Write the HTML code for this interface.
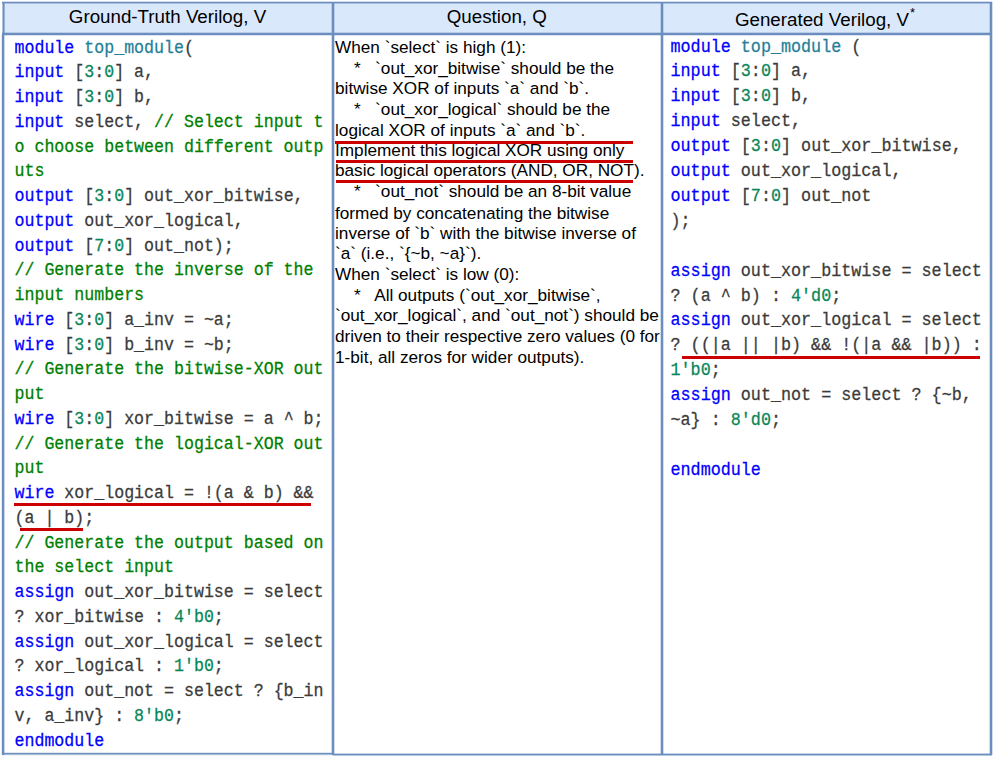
<!DOCTYPE html>
<html><head><meta charset="utf-8"><style>
html,body{margin:0;padding:0;background:#fff;}
body{width:996px;height:757px;position:relative;overflow:hidden;}
.code{position:absolute;white-space:pre;font-family:"Liberation Mono",monospace;font-size:16.63px;line-height:24px;color:#3b3b3b;-webkit-text-stroke:0.25px currentColor;transform:scaleY(1.08);transform-origin:0 16px;}
.r{font-size:16.74px;}
.q{position:absolute;white-space:pre;font-family:"Liberation Sans",sans-serif;font-size:17.2px;line-height:20px;color:#000;}
.h{position:absolute;width:400px;text-align:center;white-space:pre;font-family:"Liberation Sans",sans-serif;font-size:18.75px;line-height:24px;color:#000;}
</style></head><body>
<div style="position:absolute;left:3px;top:3px;width:988px;height:31px;background:#dae8fc"></div><div style="position:absolute;left:2px;top:1px;width:990px;height:4px;background:linear-gradient(to bottom, rgba(108,142,191,0.3) 0px, rgba(108,142,191,0.3) 1px, rgba(108,142,191,1) 1px, rgba(108,142,191,1) 2px, rgba(108,142,191,0.45) 2px, rgba(108,142,191,0.45) 3px, rgba(108,142,191,0.0) 3px, rgba(108,142,191,0.0) 4px)"></div><div style="position:absolute;left:2px;top:32px;width:990px;height:4px;background:linear-gradient(to bottom, rgba(108,142,191,0.3) 0px, rgba(108,142,191,0.3) 1px, rgba(108,142,191,1) 1px, rgba(108,142,191,1) 2px, rgba(108,142,191,1) 2px, rgba(108,142,191,1) 3px, rgba(108,142,191,0.25) 3px, rgba(108,142,191,0.25) 4px)"></div><div style="position:absolute;left:2px;top:752px;width:331px;height:4px;background:linear-gradient(to bottom, rgba(108,142,191,0.2) 0px, rgba(108,142,191,0.2) 1px, rgba(108,142,191,1) 1px, rgba(108,142,191,1) 2px, rgba(108,142,191,0.6) 2px, rgba(108,142,191,0.6) 3px, rgba(108,142,191,0.1) 3px, rgba(108,142,191,0.1) 4px)"></div><div style="position:absolute;left:333px;top:753px;width:659px;height:4px;background:linear-gradient(to bottom, rgba(108,142,191,0.4) 0px, rgba(108,142,191,0.4) 1px, rgba(108,142,191,1) 1px, rgba(108,142,191,1) 2px, rgba(108,142,191,0.5) 2px, rgba(108,142,191,0.5) 3px, rgba(108,142,191,0.0) 3px, rgba(108,142,191,0.0) 4px)"></div><div style="position:absolute;left:1px;top:2px;width:4px;height:33px;background:linear-gradient(to right, rgba(108,142,191,0.0) 0px, rgba(108,142,191,0.0) 1px, rgba(108,142,191,0.55) 1px, rgba(108,142,191,0.55) 2px, rgba(108,142,191,1) 2px, rgba(108,142,191,1) 3px, rgba(108,142,191,0.6) 3px, rgba(108,142,191,0.6) 4px)"></div><div style="position:absolute;left:1px;top:35px;width:4px;height:720px;background:linear-gradient(to right, rgba(108,142,191,0.2) 0px, rgba(108,142,191,0.2) 1px, rgba(108,142,191,1) 1px, rgba(108,142,191,1) 2px, rgba(108,142,191,1) 2px, rgba(108,142,191,1) 3px, rgba(108,142,191,0.35) 3px, rgba(108,142,191,0.35) 4px)"></div><div style="position:absolute;left:331px;top:2px;width:4px;height:753px;background:linear-gradient(to right, rgba(108,142,191,0.3) 0px, rgba(108,142,191,0.3) 1px, rgba(108,142,191,1) 1px, rgba(108,142,191,1) 2px, rgba(108,142,191,1) 2px, rgba(108,142,191,1) 3px, rgba(108,142,191,0.3) 3px, rgba(108,142,191,0.3) 4px)"></div><div style="position:absolute;left:660px;top:2px;width:4px;height:753px;background:linear-gradient(to right, rgba(108,142,191,0.3) 0px, rgba(108,142,191,0.3) 1px, rgba(108,142,191,1) 1px, rgba(108,142,191,1) 2px, rgba(108,142,191,1) 2px, rgba(108,142,191,1) 3px, rgba(108,142,191,0.3) 3px, rgba(108,142,191,0.3) 4px)"></div><div style="position:absolute;left:989px;top:2px;width:4px;height:753px;background:linear-gradient(to right, rgba(108,142,191,0.3) 0px, rgba(108,142,191,0.3) 1px, rgba(108,142,191,1) 1px, rgba(108,142,191,1) 2px, rgba(108,142,191,1) 2px, rgba(108,142,191,1) 3px, rgba(108,142,191,0.3) 3px, rgba(108,142,191,0.3) 4px)"></div>
<div class="h" style="left:-32.5px;top:5.30px">Ground-Truth Verilog, V</div><div class="h" style="left:296.8px;top:4.90px">Question, Q</div><div class="h" style="left:625.0px;top:8.10px">Generated Verilog, V<span style="position:relative;top:-9px;left:1px;font-size:13px;margin-right:1px">*</span></div>
<div class="code" style="left:14.50px;top:36.50px"><span style="color:#0000ff">module</span> <span style="color:#267f99">top_module</span>(</div><div class="code" style="left:14.50px;top:61.25px"><span style="color:#0000ff">input</span> [<span style="color:#098658">3</span>:<span style="color:#098658">0</span>] a,</div><div class="code" style="left:14.50px;top:86.00px"><span style="color:#0000ff">input</span> [<span style="color:#098658">3</span>:<span style="color:#098658">0</span>] b,</div><div class="code" style="left:14.50px;top:110.75px"><span style="color:#0000ff">input</span> select, <span style="color:#008000">// Select input t</span></div><div class="code" style="left:14.50px;top:135.50px"><span style="color:#008000">o choose between different outp</span></div><div class="code" style="left:14.50px;top:160.25px"><span style="color:#008000">uts</span></div><div class="code" style="left:14.50px;top:185.00px"><span style="color:#0000ff">output</span> [<span style="color:#098658">3</span>:<span style="color:#098658">0</span>] out_xor_bitwise,</div><div class="code" style="left:14.50px;top:209.75px"><span style="color:#0000ff">output</span> out_xor_logical,</div><div class="code" style="left:14.50px;top:234.50px"><span style="color:#0000ff">output</span> [<span style="color:#098658">7</span>:<span style="color:#098658">0</span>] out_not);</div><div class="code" style="left:14.50px;top:259.25px"><span style="color:#008000">// Generate the inverse of the</span></div><div class="code" style="left:14.50px;top:284.00px"><span style="color:#008000">input numbers</span></div><div class="code" style="left:14.50px;top:308.75px"><span style="color:#0000ff">wire</span> [<span style="color:#098658">3</span>:<span style="color:#098658">0</span>] a_inv = ~a;</div><div class="code" style="left:14.50px;top:333.50px"><span style="color:#0000ff">wire</span> [<span style="color:#098658">3</span>:<span style="color:#098658">0</span>] b_inv = ~b;</div><div class="code" style="left:14.50px;top:358.25px"><span style="color:#008000">// Generate the bitwise-XOR out</span></div><div class="code" style="left:14.50px;top:383.00px"><span style="color:#008000">put</span></div><div class="code" style="left:14.50px;top:407.75px"><span style="color:#0000ff">wire</span> [<span style="color:#098658">3</span>:<span style="color:#098658">0</span>] xor_bitwise = a ^ b;</div><div class="code" style="left:14.50px;top:432.50px"><span style="color:#008000">// Generate the logical-XOR out</span></div><div class="code" style="left:14.50px;top:457.25px"><span style="color:#008000">put</span></div><div class="code" style="left:14.50px;top:482.00px"><span style="color:#0000ff">wire</span> xor_logical = !(a &amp; b) &amp;&amp;</div><div class="code" style="left:14.50px;top:506.75px">(a | b);</div><div class="code" style="left:14.50px;top:531.50px"><span style="color:#008000">// Generate the output based on</span></div><div class="code" style="left:14.50px;top:556.25px"><span style="color:#008000">the select input</span></div><div class="code" style="left:14.50px;top:581.00px"><span style="color:#0000ff">assign</span> out_xor_bitwise = select</div><div class="code" style="left:14.50px;top:605.75px">? xor_bitwise : <span style="color:#098658">4&#x27;b0</span>;</div><div class="code" style="left:14.50px;top:630.50px"><span style="color:#0000ff">assign</span> out_xor_logical = select</div><div class="code" style="left:14.50px;top:655.25px">? xor_logical : <span style="color:#098658">1&#x27;b0</span>;</div><div class="code" style="left:14.50px;top:680.00px"><span style="color:#0000ff">assign</span> out_not = select ? {b_in</div><div class="code" style="left:14.50px;top:704.75px">v, a_inv} : <span style="color:#098658">8&#x27;b0</span>;</div><div class="code" style="left:14.50px;top:729.50px"><span style="color:#0000ff">endmodule</span></div><div class="code r" style="left:670.50px;top:35.50px"><span style="color:#0000ff">module</span> <span style="color:#267f99">top_module</span> (</div><div class="code r" style="left:670.50px;top:60.40px"><span style="color:#0000ff">input</span> [<span style="color:#098658">3</span>:<span style="color:#098658">0</span>] a,</div><div class="code r" style="left:670.50px;top:85.30px"><span style="color:#0000ff">input</span> [<span style="color:#098658">3</span>:<span style="color:#098658">0</span>] b,</div><div class="code r" style="left:670.50px;top:110.20px"><span style="color:#0000ff">input</span> select,</div><div class="code r" style="left:670.50px;top:135.10px"><span style="color:#0000ff">output</span> [<span style="color:#098658">3</span>:<span style="color:#098658">0</span>] out_xor_bitwise,</div><div class="code r" style="left:670.50px;top:160.00px"><span style="color:#0000ff">output</span> out_xor_logical,</div><div class="code r" style="left:670.50px;top:184.90px"><span style="color:#0000ff">output</span> [<span style="color:#098658">7</span>:<span style="color:#098658">0</span>] out_not</div><div class="code r" style="left:670.50px;top:209.80px">);</div><div class="code r" style="left:670.50px;top:259.60px"><span style="color:#0000ff">assign</span> out_xor_bitwise = select</div><div class="code r" style="left:670.50px;top:284.50px">? (a ^ b) : <span style="color:#098658">4&#x27;d0</span>;</div><div class="code r" style="left:670.50px;top:309.40px"><span style="color:#0000ff">assign</span> out_xor_logical = select</div><div class="code r" style="left:670.50px;top:334.30px">? ((|a || |b) &amp;&amp; !(|a &amp;&amp; |b)) :</div><div class="code r" style="left:670.50px;top:359.20px"><span style="color:#098658">1&#x27;b0</span>;</div><div class="code r" style="left:670.50px;top:384.10px"><span style="color:#0000ff">assign</span> out_not = select ? {~b,</div><div class="code r" style="left:670.50px;top:409.00px">~a} : <span style="color:#098658">8&#x27;d0</span>;</div><div class="code r" style="left:670.50px;top:458.80px"><span style="color:#0000ff">endmodule</span></div><div class="q" style="left:335.00px;top:37.40px">When `select` is high (1):</div><div class="q" style="left:335.00px;top:57.60px">    *   `out_xor_bitwise` should be the</div><div class="q" style="left:335.00px;top:77.90px">bitwise XOR of inputs `a` and `b`.</div><div class="q" style="left:335.00px;top:99.00px">    *   `out_xor_logical` should be the</div><div class="q" style="left:335.00px;top:120.10px">logical XOR of inputs `a` and `b`.</div><div class="q" style="left:335.00px;top:140.20px">Implement this logical XOR using only</div><div class="q" style="left:335.00px;top:160.20px">basic logical operators (AND, OR, NOT).</div><div class="q" style="left:335.00px;top:181.40px">    *   `out_not` should be an 8-bit value</div><div class="q" style="left:335.00px;top:202.70px">formed by concatenating the bitwise</div><div class="q" style="left:335.00px;top:223.30px">inverse of `b` with the bitwise inverse of</div><div class="q" style="left:335.00px;top:243.40px">`a` (i.e., `{~b, ~a}`).</div><div class="q" style="left:335.00px;top:264.30px">When `select` is low (0):</div><div class="q" style="left:335.00px;top:284.50px">    *   All outputs (`out_xor_bitwise`,</div><div class="q" style="left:335.00px;top:304.70px">`out_xor_logical`, and `out_not`) should be</div><div class="q" style="left:335.00px;top:325.80px">driven to their respective zero values (0 for</div><div class="q" style="left:335.00px;top:346.90px">1-bit, all zeros for wider outputs).</div>
<div style="position:absolute;left:335px;top:141.00px;width:297.70000000000005px;height:3px;background:#cc0000"></div><div style="position:absolute;left:335.5px;top:160.00px;width:297.20000000000005px;height:3px;background:#cc0000"></div><div style="position:absolute;left:335.5px;top:180.00px;width:297.20000000000005px;height:3px;background:#cc0000"></div><div style="position:absolute;left:13.7px;top:503.10px;width:297.7px;height:3px;background:#cc0000"></div><div style="position:absolute;left:19.8px;top:527.70px;width:62.8px;height:3px;background:#cc0000"></div><div style="position:absolute;left:681.8px;top:355.50px;width:297.9000000000001px;height:3px;background:#cc0000"></div>
</body></html>
